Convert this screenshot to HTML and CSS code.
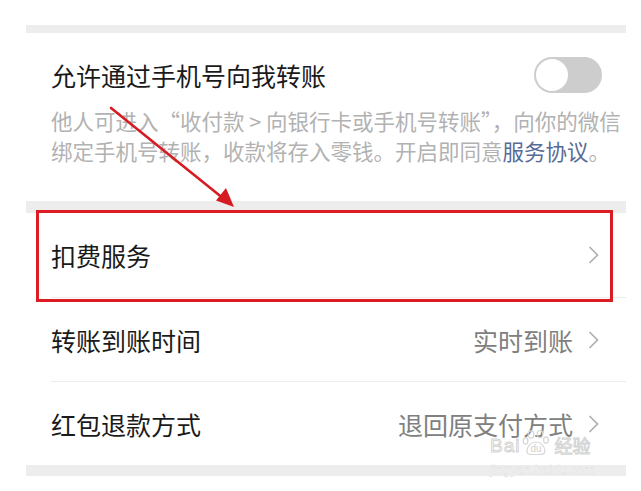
FILE: index.html
```html
<!DOCTYPE html>
<html lang="zh-CN">
<head>
<meta charset="utf-8">
<title>转账设置</title>
<link rel="stylesheet" href="styles.css">
</head>
<body>
<div class="screen">
  <div class="card">
    <div class="band band-top"></div>
    <section class="switch-section">
      <div class="switch-row">
        <span class="title">允许通过手机号向我转账</span>
        <span class="toggle"><span class="knob"></span></span>
      </div>
      <p class="desc">他人可进入“收付款 &gt; 向银行卡或手机号转账”，向你的微信<br>绑定手机号转账，收款将存入零钱。开启即同意<a class="link">服务协议</a>。</p>
    </section>
    <div class="band band-mid"></div>
    <ul class="list">
      <li class="row row-first">
        <span class="label">扣费服务</span>
        <span class="value"></span>
        <svg class="chevron" viewBox="0 0 11 18" width="11" height="18"><path d="M1.5 1 L9.5 9 L1.5 17" fill="none" stroke="#b0b0b0" stroke-width="1.7"/></svg>
      </li>
      <li class="row">
        <span class="label">转账到账时间</span>
        <span class="value">实时到账</span>
        <svg class="chevron" viewBox="0 0 11 18" width="11" height="18"><path d="M1.5 1 L9.5 9 L1.5 17" fill="none" stroke="#b0b0b0" stroke-width="1.7"/></svg>
      </li>
      <li class="row row-last">
        <span class="label">红包退款方式</span>
        <span class="value">退回原支付方式</span>
        <svg class="chevron" viewBox="0 0 11 18" width="11" height="18"><path d="M1.5 1 L9.5 9 L1.5 17" fill="none" stroke="#b0b0b0" stroke-width="1.7"/></svg>
      </li>
    </ul>
    <div class="band band-bottom"></div>
  </div>

  <svg class="arrow" width="641" height="491" viewBox="0 0 641 491">
    <line x1="111" y1="108" x2="224" y2="199" stroke="#d61c22" stroke-width="2.6" stroke-linecap="round"/>
    <polygon points="234,207 216,200.5 226,188" fill="#d61c22"/>
  </svg>
  <div class="highlight"></div>

  <div class="watermark">
    <div class="wm-top">
      <span class="wm-bai">Bai</span>
      <svg class="wm-paw" viewBox="0 0 34 26" width="34" height="26">
        <g fill="none" stroke="#d6d6d6" stroke-width="1.2">
          <ellipse cx="11" cy="4.5" rx="2.8" ry="3.6"/>
          <ellipse cx="20" cy="4" rx="2.8" ry="3.6"/>
          <ellipse cx="5.5" cy="11" rx="2.4" ry="3.1"/>
          <ellipse cx="26" cy="10" rx="2.4" ry="3.1"/>
          <path d="M7 22 C7 15 12 12 16 12 C20 12 25 16 25 21 C25 25 20 24.5 16 24.5 C12 24.5 7 25 7 22 Z"/>
        </g>
        <text x="16" y="22" text-anchor="middle" class="wm-du">du</text>
      </svg>
      <span class="wm-jy">经验</span>
    </div>
    <div class="wm-url">jingyan.baidu.com</div>
  </div>
</div>
</body>
</html>
```

FILE: styles.css
```css
* {
  box-sizing: border-box;
}

html, body {
  margin: 0;
  padding: 0;
  background: #ffffff;
}

body {
  font-family: "Noto Sans CJK SC", "Noto Sans", "Liberation Sans", sans-serif;
  color: #1a1a1a;
}

.screen {
  position: relative;
  width: 641px;
  height: 491px;
  overflow: hidden;
  background: #ffffff;
}

.card {
  margin-left: 26px;
  width: 600px;
  padding-top: 25px;
}

.band {
  background: #ededed;
}

.band-top {
  height: 8px;
}

.band-mid {
  height: 12px;
  margin-top: 1px;
}

.band-bottom {
  height: 11px;
}

.switch-section {
  padding: 24px 24px 0 25px;
  height: 167px;
}

.switch-row {
  display: flex;
  align-items: center;
  justify-content: space-between;
  height: 36px;
}

.title {
  font-size: 25px;
  line-height: 36px;
  color: #1a1a1a;
}

.toggle {
  display: flex;
  align-items: center;
  width: 68px;
  height: 36px;
  border-radius: 18px;
  background: #cdcdcd;
  padding: 2px;
}

.knob {
  width: 32px;
  height: 32px;
  border-radius: 50%;
  background: #ffffff;
}

.desc {
  margin: 13px 0 0 0;
  font-size: 21.5px;
  line-height: 30px;
  color: #b2b2b2;
  white-space: nowrap;
}

.link {
  color: #576b95;
}

.list {
  list-style: none;
  margin: 0;
  padding: 0;
}

.row {
  display: flex;
  align-items: center;
  height: 84px;
  margin-left: 25px;
  padding-right: 27px;
  border-bottom: 1px solid #ececec;
}

.row-first {
  height: 85px;
}

.row-last {
  height: 83px;
  border-bottom: none;
}

.label {
  flex: 1;
  font-size: 25px;
  color: #1a1a1a;
}

.value {
  font-size: 25px;
  color: #808080;
  margin-right: 15px;
}

.chevron {
  display: block;
  flex: none;
}

.arrow {
  position: absolute;
  left: 0;
  top: 0;
  pointer-events: none;
}

.highlight {
  position: absolute;
  left: 36px;
  top: 210px;
  width: 577px;
  height: 92px;
  border: 3px solid #dc1c24;
}

.watermark {
  position: absolute;
  left: 490px;
  top: 424px;
  width: 120px;
  display: flex;
  flex-direction: column;
  align-items: flex-start;
}

.wm-top {
  display: flex;
  align-items: flex-end;
  height: 32px;
}

.wm-bai {
  font-family: "Liberation Sans", sans-serif;
  font-size: 19px;
  line-height: 20px;
  color: #ffffff;
  -webkit-text-stroke: 1px #d4d4d4;
  letter-spacing: 1px;
}

.wm-paw {
  display: block;
  margin-bottom: 0;
}

.wm-du {
  font-family: "Liberation Sans", sans-serif;
  font-size: 10px;
  fill: #d2d2d2;
}

.wm-jy {
  font-size: 18px;
  line-height: 22px;
  color: #ffffff;
  -webkit-text-stroke: 1px #d4d4d4;
}

.wm-url {
  font-family: "Liberation Sans", sans-serif;
  font-size: 13px;
  line-height: 15px;
  color: #fafafa;
  -webkit-text-stroke: 0.3px #d8d8d8;
  margin-top: 6px;
}
```
